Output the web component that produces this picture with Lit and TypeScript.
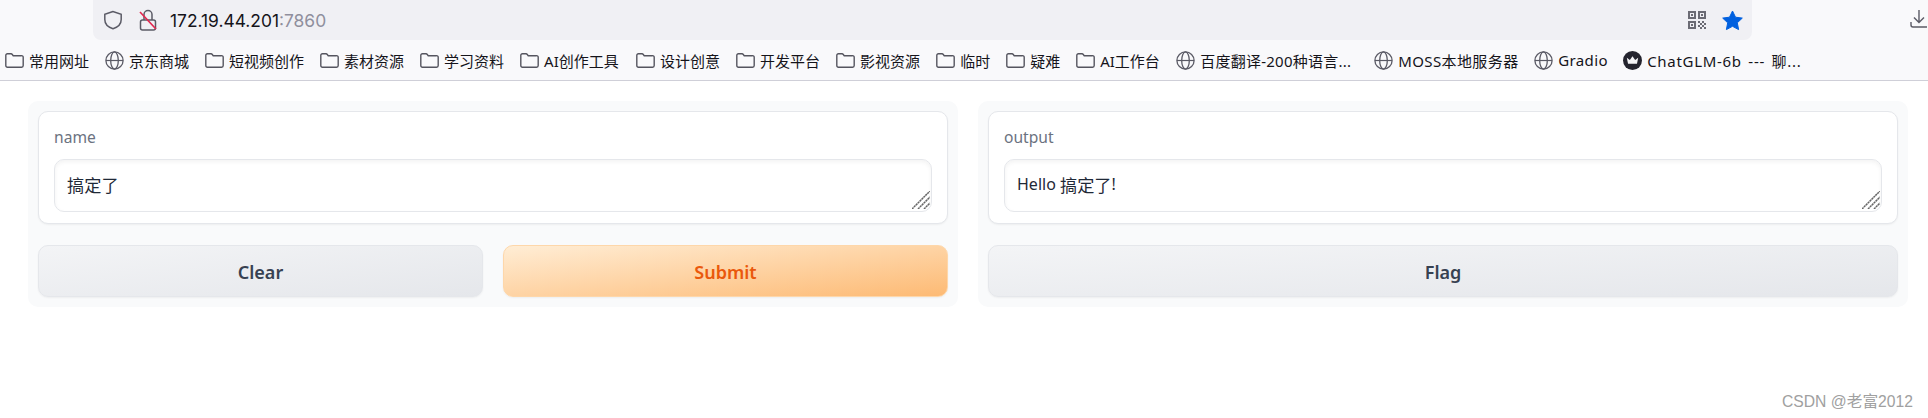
import { LitElement, html, css, svg } from "lit";
import { customElement } from "lit/decorators.js";

const folder = html`<svg class="ic" viewBox="0 0 19 19" fill="none" stroke="#55555f" stroke-width="1.4"><path d="M.8 14.6V4.4a1.6 1.6 0 0 1 1.6-1.6h3.6c.6 0 1 .3 1.3.7l.9 1.2h8.1a1.6 1.6 0 0 1 1.9 1.6v8.3a1.6 1.6 0 0 1-1.6 1.6H2.4a1.6 1.6 0 0 1-1.6-1.6z"/></svg>`;
const globe = html`<svg class="ic" viewBox="0 0 19 19" fill="none" stroke="#5b5b66" stroke-width="1.3"><circle cx="9.5" cy="9.5" r="8.6"/><ellipse cx="9.5" cy="9.5" rx="3.8" ry="8.6"/><path d="M1 9.5h17" stroke-width="1.2"/></svg>`;
const crown = html`<svg class="ic" viewBox="0 0 20 20"><circle cx="10" cy="10" r="10" fill="#24242e"/><path d="M4 7l3.2 2.4L10 5.4l2.8 4L16 7l-1.3 6.4H5.3z" fill="#f4f4f6"/></svg>`;
const corner = svg`<path d="M0 18 18 0M6 18 18 6M12 18l6-6" stroke="#666" stroke-width="1.5" stroke-dasharray="2.2 .5"/>`;

const marks: [unknown, string, number?, number?][] = [
  [folder, "常用网址"],
  [globe, "京东商城"],
  [folder, "短视频创作"],
  [folder, "素材资源"],
  [folder, "学习资料"],
  [folder, "AI创作工具", 76],
  [folder, "设计创意"],
  [folder, "开发平台"],
  [folder, "影视资源"],
  [folder, "临时"],
  [folder, "疑难"],
  [folder, "AI工作台", 60],
  [globe, "百度翻译-200种语言...", 158, 0.25],
  [globe, "MOSS本地服务器", 120, 0.4],
  [globe, "Gradio", 49, 0.4],
  [crown, "ChatGLM-6b --- 聊...", 150, 0.7],
];

@customElement("app-root")
export class AppRoot extends LitElement {
  static styles = css`
    :host {
      display: block;
      width: 1928px;
      height: 418px;
      background: #fff;
      overflow: hidden;
      font-family: "Noto Sans", "Noto Sans CJK SC", sans-serif;
    }
    .top { display: flex; height: 40px; padding-left: 93px; background: #f9f9fb; }
    .url {
      width: 1660px; height: 40px; box-sizing: border-box;
      background: #f0f0f4; border-radius: 0 0 8px 8px;
      display: flex; align-items: center; padding: 0 9px 0 9px;
    }
    .shield { width: 22px; height: 22px; }
    .lock { width: 20px; height: 22px; margin-left: 14px; }
    .addr { margin-left: 12px; padding-top: 1px; font: 17.4px "Inter", "Noto Sans", sans-serif; color: #15141a; }
    .addr span { color: #8f8f9d; }
    .spacer { flex: 1; }
    .qr { width: 18px; height: 18px; }
    .star { width: 21px; height: 21px; margin-left: 16px; }
    .dl { margin-left: 158px; margin-top: 9px; width: 18px; height: 20px; }
    .marks {
      display: flex; align-items: center; gap: 16px;
      height: 40px; padding-left: 5px;
      background: #f9f9fb; border-bottom: 1px solid #cfcfd8;
      white-space: nowrap;
    }
    .mark { display: flex; align-items: center; gap: 5px; font-size: 15px; color: #15141a; word-spacing: 2px; }
    .ic { width: 19px; height: 19px; flex: none; }
    .cols { display: flex; gap: 20px; padding: 20px 20px 0 28px; }
    .panel {
      flex: 1; height: 206px; box-sizing: border-box; padding: 10px;
      background: #f9fafb; border-radius: 10px;
      display: flex; flex-direction: column; gap: 21px;
    }
    .card {
      height: 113px; box-sizing: border-box; padding: 15px 15px 0;
      background: #fff; border: 1px solid #e5e7eb; border-radius: 10px;
      box-shadow: 0 1px 2px rgba(0,0,0,.05);
    }
    .label { font-size: 15.6px; line-height: 20px; color: #6b7280; margin-bottom: 12px; }
    .field {
      position: relative; height: 53px; box-sizing: border-box;
      border: 1px solid #e5e7eb; border-radius: 10px; background: #fff;
      box-shadow: inset 0 2px 4px rgba(0,0,0,.05);
      padding: 0 12px 3px; display: flex; align-items: center;
      color: #1f2937; white-space: pre;
    }
    .latin { font-size: 16px; }
    .cjk { font-size: 17.2px; }
    .grip { position: absolute; right: 1px; bottom: 2px; width: 18px; height: 18px; }
    .btns { display: flex; gap: 20px; }
    button {
      flex: 1; height: 52px; border-radius: 10px; padding: 1px 0 0;
      font: 600 18px "Noto Sans", sans-serif; color: #374151;
      border: 1px solid #e5e7eb;
      background: linear-gradient(to bottom right, #f3f4f6, #e5e7eb);
      box-shadow: 0 1px 2px rgba(0,0,0,.05);
    }
    button.primary {
      color: #ea580c; border-color: #fed7aa;
      background: linear-gradient(to bottom right, #ffedd5, #fdba74);
    }
    .foot { display: flex; justify-content: flex-end; padding: 85px 15px 0 0; }
    .foot span { font-size: 15.7px; color: #a0a0a0; line-height: 20px; font-family: "Liberation Sans", "Noto Sans CJK SC", sans-serif; }
  `;

  private grip() {
    return html`<svg class="grip" viewBox="0 0 18 18" fill="none">${corner}</svg>`;
  }

  render() {
    return html`
      <div class="top">
        <div class="url">
          <svg class="shield" viewBox="0 0 22 22" fill="none" stroke="#5b5b66" stroke-width="1.5"><path d="M11 2.5 2.8 5.2v5.3c0 4.6 3.4 7.7 8.2 9.2 4.8-1.5 8.2-4.6 8.2-9.2V5.2z"/></svg>
          <svg class="lock" viewBox="0 0 20 22" fill="none" stroke="#5b5b66" stroke-width="1.5"><rect x="2.5" y="11" width="15" height="10" rx="2"/><path d="M6 11V5.5a4 4 0 0 1 8 0V11"/><path d="M2 3l16 17" stroke="#e22850" stroke-width="1.7"/></svg>
          <div class="addr">172.19.44.201<span>:7860</span></div>
          <div class="spacer"></div>
          <svg class="qr" viewBox="0 0 18 18" fill="#6b6b74">
            <path fill-rule="evenodd" d="M0 0h8v8H0zM2 2v4h4V2zM10 0h8v8h-8zM12 2v4h4V2zM0 10h8v8H0zM2 12v4h4v-4z"/>
            <path d="M3 3h2v2H3zM13 3h2v2h-2zM3 13h2v2H3zM10 10h2v2h-2zM14 10h2v2h-2zM12 12h2v2h-2zM16 12h2v2h-2zM10 14h2v2h-2zM14 14h2v2h-2zM12 16h2v2h-2zM16 16h2v2h-2z"/>
          </svg>
          <svg class="star" viewBox="0 0 21 21"><path d="M10.5 1l3 6.2 6.8.9-5 4.7 1.3 6.8-6.1-3.3-6.1 3.3 1.3-6.8-5-4.7 6.8-.9z" fill="#0060df" stroke="#0060df" stroke-linejoin="round"/></svg>
        </div>
        <svg class="dl" viewBox="0 0 18 20" fill="none" stroke="#5b5b66" stroke-width="1.4"><path d="M9 1v12M4 8.5 9 13.5l5-5M1 13v3a2 2 0 0 0 2 2h14"/></svg>
      </div>
      <div class="marks">
        ${marks.map(([icon, text, w, ls]) => html`<div class="mark">${icon}<span style=${(w ? `width:${w}px;` : "") + (ls ? `letter-spacing:${ls}px` : "")}>${text}</span></div>`)}
      </div>
      <div class="cols">
        <div class="panel">
          <div class="card">
            <div class="label">name</div>
            <div class="field"><span class="cjk">搞定了</span>${this.grip()}</div>
          </div>
          <div class="btns"><button>Clear</button><button class="primary">Submit</button></div>
        </div>
        <div class="panel">
          <div class="card">
            <div class="label">output</div>
            <div class="field"><span class="latin">Hello </span><span class="cjk">搞定了</span><span class="latin">!</span>${this.grip()}</div>
          </div>
          <div class="btns"><button>Flag</button></div>
        </div>
      </div>
      <div class="foot"><span>CSDN @老富2012</span></div>
    `;
  }
}
